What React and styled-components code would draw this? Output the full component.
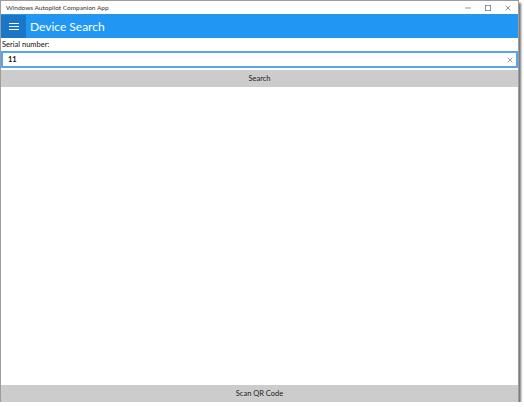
import React from 'react';
import styled, { createGlobalStyle } from 'styled-components';

const GlobalStyle = createGlobalStyle`
  html, body {
    margin: 0;
    padding: 0;
    background: #ffffff;
  }
  body {
    font-family: Lato, "Open Sans", sans-serif;
  }
`;

const Window = styled.div`
  width: 519px;
  height: 402px;
  box-sizing: border-box;
  border: 1px solid #9c9c9c;
  border-bottom: none;
  background: #ffffff;
  box-shadow: 2px 3px 2px rgba(0, 0, 0, 0.55);
  display: flex;
  flex-direction: column;
`;

const TitleBar = styled.div`
  height: 13px;
  display: flex;
  align-items: center;
  padding-left: 5px;
  font-size: 6.5px;
  color: #333;
`;

const TitleText = styled.span`
  flex: 1;
`;

const Controls = styled.div`
  display: flex;
  align-items: center;
`;

const ControlButton = styled.div`
  width: 20px;
  height: 13px;
  display: flex;
  align-items: center;
  justify-content: center;
`;

const Header = styled.header`
  height: 24px;
  background: #2196f3;
  display: flex;
  align-items: center;
`;

const MenuButton = styled.div`
  width: 25px;
  height: 23px;
  background: #1a76c7;
  display: flex;
  flex-direction: column;
  align-items: center;
  justify-content: center;
  gap: 2px;
`;

const MenuLine = styled.span`
  display: block;
  width: 10px;
  height: 1px;
  background: #ffffff;
`;

const PageTitle = styled.h1`
  margin: 1px 0 0 4px;
  font-size: 12px;
  font-weight: 400;
  color: #ffffff;
  line-height: 1;
`;

const Content = styled.main`
  flex: 1;
  display: flex;
  flex-direction: column;
`;

const Label = styled.label`
  font-size: 7.5px;
  color: #111;
  padding: 2px 0 0 1px;
  height: 10px;
  line-height: 10px;
`;

const InputWrap = styled.div`
  margin-top: 1px;
  height: 17px;
  box-sizing: border-box;
  border: 2px solid #5aa4ee;
  display: flex;
  align-items: center;
  padding: 0 3px 0 5px;
`;

const InputText = styled.span`
  flex: 1;
  font-size: 7.5px;
  font-weight: 700;
  color: #111;
`;

const Button = styled.div`
  height: 17px;
  margin-top: ${p => p.$top || 0}px;
  background: #cccccc;
  display: flex;
  align-items: center;
  justify-content: center;
  font-size: 7.5px;
  color: #1e1e1e;
`;

const Spacer = styled.div`
  flex: 1;
`;

const Cross = ({ size = 6, color = '#555' }) => (
  <svg width={size} height={size} viewBox="0 0 10 10">
    <path d="M1 1 L9 9 M9 1 L1 9" stroke={color} strokeWidth="1.1" fill="none" />
  </svg>
);

export default function App() {
  return (
    <>
      <GlobalStyle />
      <Window>
        <TitleBar>
          <TitleText>Windows Autopilot Companion App</TitleText>
          <Controls>
            <ControlButton>
              <svg width="6" height="6" viewBox="0 0 10 10">
                <path d="M0 5 H10" stroke="#555" strokeWidth="1" />
              </svg>
            </ControlButton>
            <ControlButton>
              <svg width="6" height="6" viewBox="0 0 10 10">
                <rect x="0.5" y="0.5" width="9" height="9" stroke="#555" strokeWidth="1" fill="none" />
              </svg>
            </ControlButton>
            <ControlButton>
              <Cross />
            </ControlButton>
          </Controls>
        </TitleBar>
        <Header>
          <MenuButton>
            <MenuLine />
            <MenuLine />
            <MenuLine />
          </MenuButton>
          <PageTitle>Device Search</PageTitle>
        </Header>
        <Content>
          <Label>Serial number:</Label>
          <InputWrap>
            <InputText>11</InputText>
            <Cross size={6} color="#666" />
          </InputWrap>
          <Button $top={2}>Search</Button>
          <Spacer />
          <Button>Scan QR Code</Button>
        </Content>
      </Window>
    </>
  );
}
